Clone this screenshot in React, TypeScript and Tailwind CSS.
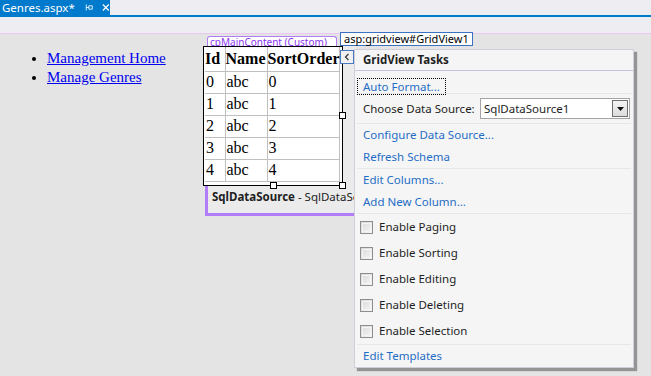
import React from "react";

const ui = { fontFamily: '"Noto Sans", "Open Sans", sans-serif' };
const serif = { fontFamily: '"Liberation Serif", "Times New Roman", serif' };

const rows = [0, 1, 2, 3, 4];

const Check: React.FC<{ label: string }> = ({ label }) => (
  <div className="h-[26px] flex items-center pl-[5px] gap-[6px]">
    <div className="w-[13px] h-[13px] border border-[#8e8e8e] bg-gradient-to-br from-[#d8d8d8] to-[#f7f7f7] p-[1px]">
      <div className="w-full h-full border border-[#f4f4f4]" />
    </div>
    <span className="text-[11.5px] text-[#1e1e1e]">{label}</span>
  </div>
);

const Link: React.FC<{ label: string }> = ({ label }) => (
  <div className="h-[22px] flex items-center pl-[8px] text-[11.5px] text-[#1f6dc6]">{label}</div>
);

const Sep: React.FC = () => <div className="mx-[2px] h-px bg-[#e7e7ea]" />;

export default function App() {
  return (
    <div className="w-[651px] h-[376px] bg-[#e4e4e4] relative overflow-hidden" style={ui}>
      {/* document tab strip */}
      <div className="h-[15px] bg-[#eeeef2] flex">
        <div className="w-[110px] bg-[#007acc] flex items-center text-white text-[11.5px] pl-[2px] leading-none">
          <span>Genres.aspx*</span>
          <svg width="10" height="9" viewBox="0 0 10 9" className="ml-[10px]">
            <path d="M1.5 1v7M1.5 4.5h3M4.5 2.5h4v4h-4z" stroke="white" strokeWidth="1" fill="none" />
          </svg>
          <svg width="9" height="9" viewBox="0 0 9 9" className="ml-[9px]">
            <path d="M1 1l7 7M8 1l-7 7" stroke="white" strokeWidth="1.4" />
          </svg>
        </div>
      </div>
      <div className="h-[2px] bg-[#007acc]" />
      <div className="h-[17px] bg-[#eeeef2] border-b border-[#e9c7f0]" />

      {/* design surface */}
      <div className="flex">
        <ul className="w-[205px] list-disc pl-[47px] pt-[15px] text-[15px] leading-[19px] text-black" style={serif}>
          <li><span className="underline text-[#0000ee]">Management Home</span></li>
          <li><span className="underline text-[#0000ee]">Manage Genres</span></li>
        </ul>

        <div className="pt-[2px]">
          <div className="ml-[2px] w-[130px] h-[12px] border border-b-0 border-[#b07ef2] rounded-t-[3px] bg-white text-[#8a35f0] text-[10px] leading-[11px] pl-[2px] whitespace-nowrap overflow-hidden">
            cpMainContent (Custom)
          </div>
          <div className="w-[152px] h-[170px] border-l-[3px] border-b-[3px] border-[#b27cf6] bg-[#ebebeb]">
            <div className="-ml-[5px] -mt-[2px] w-[140px] h-[140px] border border-black bg-white relative" style={serif}>
              <table className="border-collapse text-[16px] leading-[20px] text-black ml-[1px]">
                <thead>
                  <tr className="h-[24px]">
                    <th className="w-[20px] p-0 border border-[#c0c0c0] border-t-0 border-l-0 text-left font-bold">Id</th>
                    <th className="w-[42px] p-0 border border-[#c0c0c0] border-t-0 text-left font-bold">Name</th>
                    <th className="w-[72px] p-0 border border-[#c0c0c0] border-t-0 text-left font-bold">SortOrder</th>
                  </tr>
                </thead>
                <tbody>
                  {rows.map((r) => (
                    <tr key={r} className="h-[22px]">
                      <td className="p-0 border border-[#c0c0c0] border-l-0 pl-[1px]">{r}</td>
                      <td className="p-0 border border-[#c0c0c0] pl-[1px]">abc</td>
                      <td className="p-0 border border-[#c0c0c0] pl-[1px]">{r}</td>
                    </tr>
                  ))}
                </tbody>
              </table>
              <div className="absolute right-[-4px] top-[65px] w-[7px] h-[7px] bg-white border border-black" />
              <div className="absolute right-[-4px] bottom-[-4px] w-[7px] h-[7px] bg-white border border-black" />
              <div className="absolute left-[66px] bottom-[-4px] w-[7px] h-[7px] bg-white border border-black" />
            </div>
            <div className="w-[146px] overflow-hidden pl-[4px] pt-[2px] text-[11.5px] text-[#1e1e1e] whitespace-nowrap">
              <span className="font-bold">SqlDataSource</span> - SqlDataSource1
            </div>
          </div>
        </div>
      </div>

      {/* element tag */}
      <div className="absolute left-[340px] top-[32px] h-[14px] px-[3px] border border-[#3c70c0] bg-white text-[11px] leading-[12px] text-black">
        asp:gridview#GridView1
      </div>

      {/* smart tag glyph */}
      <div className="absolute left-[340px] top-[50px] w-[14px] h-[14px] border border-[#4a77c2] bg-[#f0f0f0] flex items-center justify-center">
        <svg width="6" height="8" viewBox="0 0 6 8">
          <path d="M4.5 1L1.5 4l3 3" stroke="#333" strokeWidth="1.2" fill="none" />
        </svg>
      </div>

      {/* tasks panel */}
      <div className="absolute left-[354px] top-[49px] w-[280px] h-[319px] bg-[#f5f5f5] border border-[#cfcfdc] shadow-[3px_3px_1px_rgba(0,0,0,0.35)] text-[#1e1e1e]">
        <div className="h-[21px] flex items-center pl-[8px] text-[11.5px] font-bold border-b border-[#c6c6e0]">GridView Tasks</div>
        <div className="h-[22px] pt-[2px] pl-[2px]">
          <span className="inline-flex h-[17px] items-center px-[5px] border border-dotted border-black text-[11.5px] text-[#1f6dc6]">Auto Format...</span>
        </div>
        <Sep />
        <div className="h-[29px] flex items-center pl-[8px] text-[11.5px]">
          <span className="w-[117px]">Choose Data Source:</span>
          <div className="w-[150px] h-[21px] border border-[#a5a5a5] bg-white flex items-center justify-between pl-[3px] pr-[1px]">
            <span>SqlDataSource1</span>
            <div className="w-[16px] h-[17px] border border-[#707070] bg-gradient-to-b from-[#f4f4f4] to-[#dcdcdc] flex items-center justify-center">
              <svg width="7" height="4" viewBox="0 0 7 4"><path d="M0 0h7L3.5 4z" fill="#111" /></svg>
            </div>
          </div>
        </div>
        <Sep />
        <Link label="Configure Data Source..." />
        <Link label="Refresh Schema" />
        <Sep />
        <Link label="Edit Columns..." />
        <Link label="Add New Column..." />
        <Sep />
        <Check label="Enable Paging" />
        <Check label="Enable Sorting" />
        <Check label="Enable Editing" />
        <Check label="Enable Deleting" />
        <Check label="Enable Selection" />
        <Sep />
        <Link label="Edit Templates" />
      </div>
    </div>
  );
}
